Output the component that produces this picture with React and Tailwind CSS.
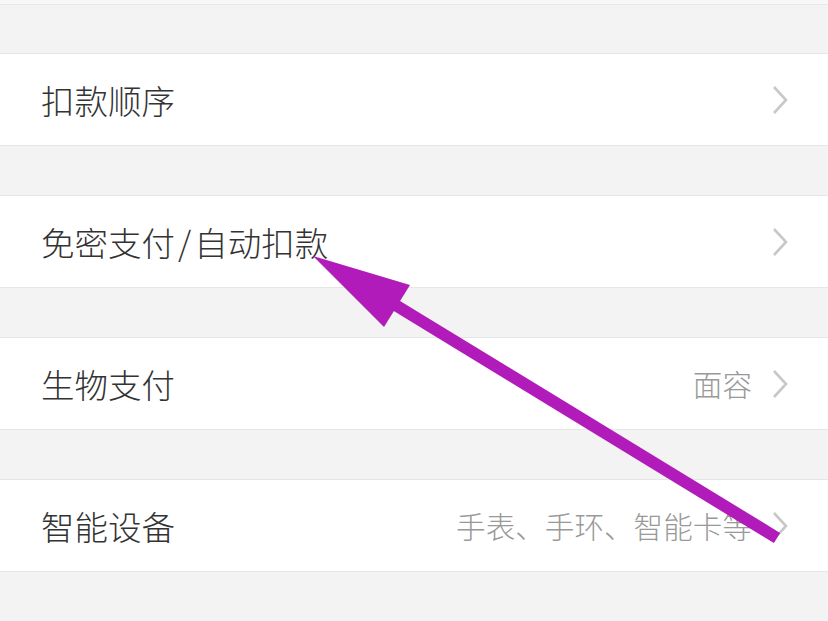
import React from "react";

const Chevron = () => (
  <svg width="16" height="30" viewBox="0 0 16 30" className="shrink-0">
    <path d="M2 2 L14 15 L2 28" fill="none" stroke="#c8c8c8" strokeWidth="2.6" />
  </svg>
);

const Row = ({ title, value }) => (
  <div className="flex h-[93px] items-center bg-white pl-[41px] pr-[40px] border-y border-[#e6e6e6]">
    <div className="flex-1 text-[33.5px] font-light leading-none text-[#333333]">{title}</div>
    {value && <div className="mr-[20px] text-[29.6px] font-light leading-none text-[#999999]">{value}</div>}
    <Chevron />
  </div>
);

export default function App() {
  return (
    <div
      className="relative h-[621px] w-[828px] overflow-hidden bg-[#f3f3f3]"
      style={{ fontFamily: '"Noto Sans CJK SC", "Noto Sans", sans-serif' }}
    >
      <div className="h-[5px] bg-[#f7f7f7] border-b border-[#e8e8e8]" />
      <div className="h-[48px]" />
      <Row title="扣款顺序" />
      <div className="h-[49px]" />
      <Row
        title={
          <>
            免密支付<span className="mx-[3px]">/</span>自动扣款
          </>
        }
      />
      <div className="h-[49px]" />
      <Row title="生物支付" value="面容" />
      <div className="h-[49px]" />
      <Row title="智能设备" value="手表、手环、智能卡等" />
      <svg className="pointer-events-none absolute left-0 top-0" width="828" height="621">
        <line x1="777" y1="538" x2="392" y2="303" stroke="#b11bb9" strokeWidth="12" />
        <polygon points="313,256 410,285 384,327" fill="#b11bb9" />
      </svg>
    </div>
  );
}
